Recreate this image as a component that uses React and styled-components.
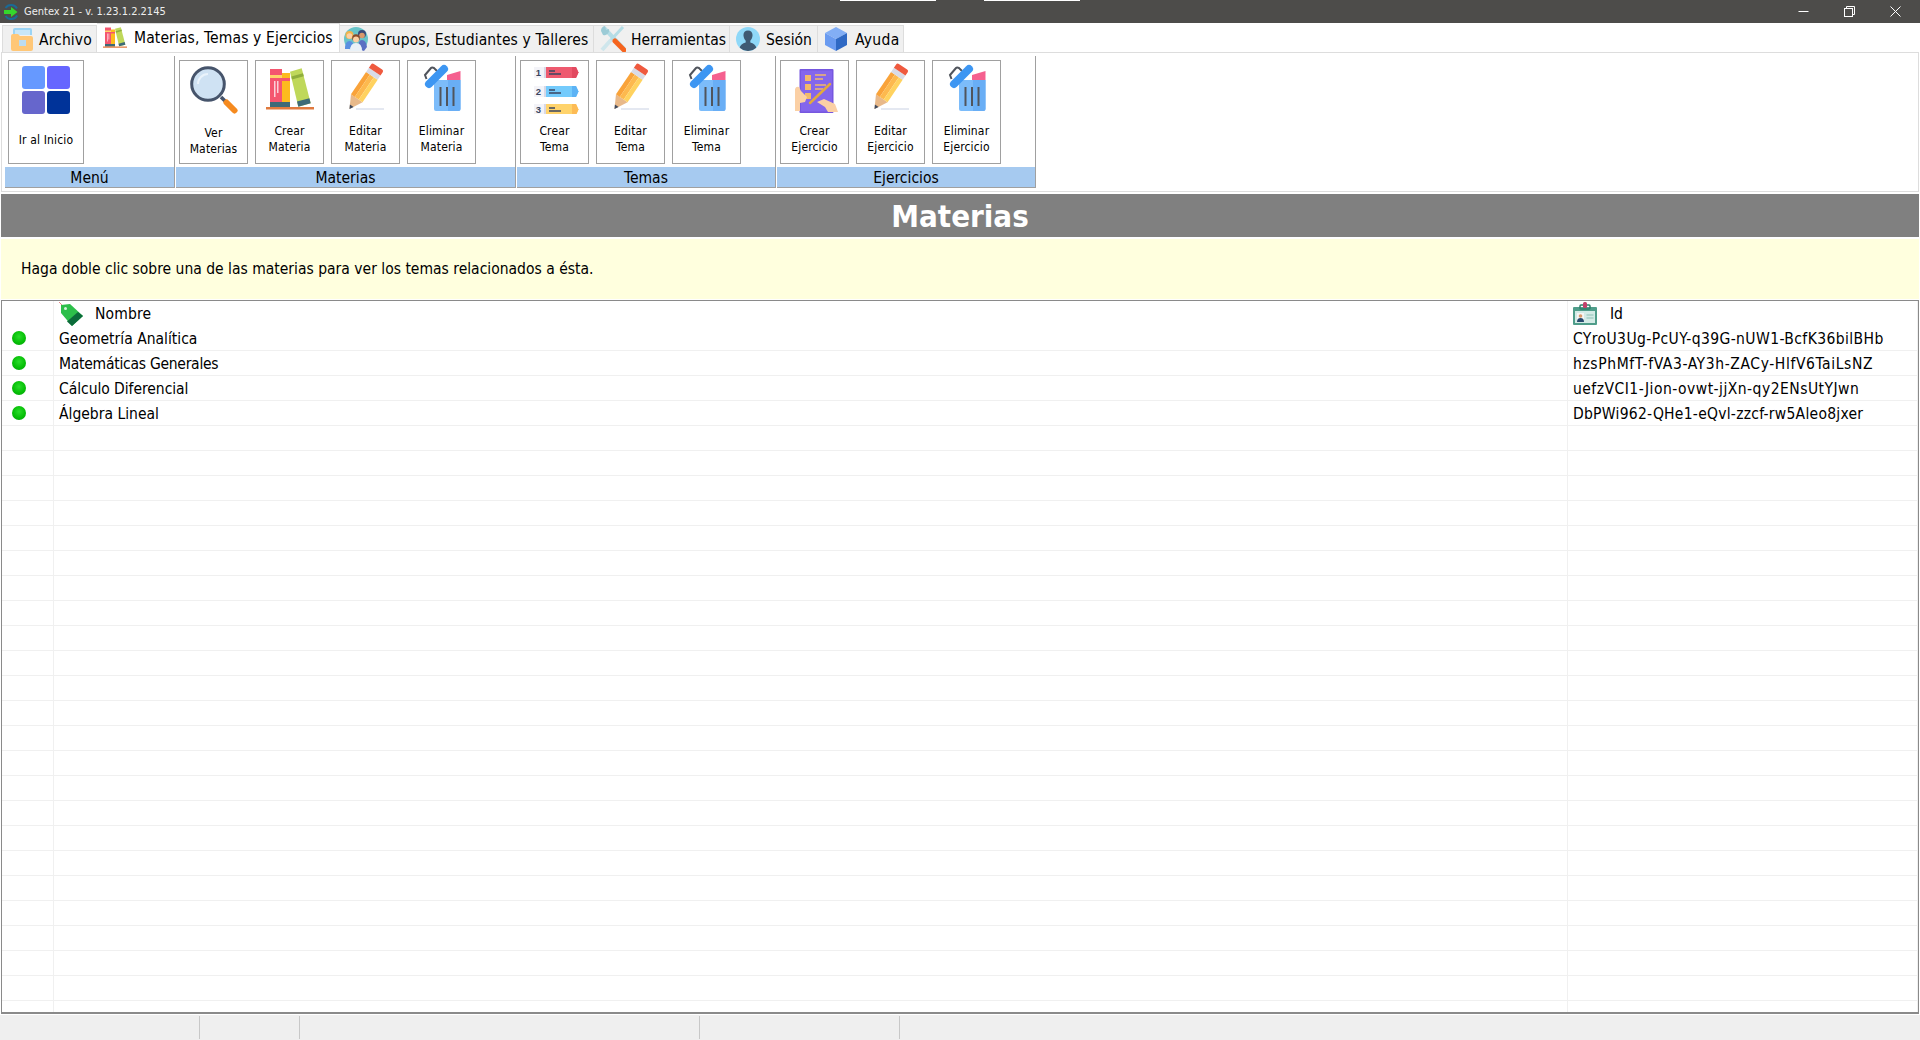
import React from "react";
import styled, { createGlobalStyle } from "styled-components";

const GlobalStyle = createGlobalStyle`
  html, body {
    margin: 0;
    padding: 0;
    background: #fff;
  }
  body {
    font-family: "DejaVu Sans Condensed", "DejaVu Sans", sans-serif;
    font-stretch: condensed;
    color: #000;
    overflow: hidden;
  }
  * {
    box-sizing: border-box;
  }
`;

const Window = styled.div`
  position: relative;
  display: flex;
  flex-direction: column;
  width: 1920px;
  height: 1040px;
  overflow: hidden;
`;
const TitleBar = styled.div`
  display: flex;
  align-items: center;
  height: 23px;
  padding: 0 2px 0 3px;
  background: #4d4c4a;
  color: #eeeeee;
  font-size: 11px;
`;
const TitleText = styled.span`
  margin-left: 5px;
  flex: 1;
`;
const WindowButton = styled.div`
  display: flex;
  align-items: center;
  justify-content: center;
  width: 46px;
  height: 23px;
`;
const ScreenMark = styled.div`
  position: absolute;
  top: 0;
  left: ${p => p.$left}px;
  width: ${p => p.$width}px;
  height: 1px;
  background: #fff;
`;
const TabStrip = styled.div`
  display: flex;
  align-items: flex-end;
  height: 29px;
  padding-left: 2px;
`;
const Tab = styled.div`
  display: flex;
  align-items: center;
  width: ${p => p.$width}px;
  height: ${p => (p.$active ? 29 : 27)}px;
  padding-left: ${p => p.$pad}px;
  gap: ${p => p.$gap}px;
  background: ${p => (p.$active ? "#fff" : "#f0f0f0")};
  border: 1px solid #dddddd;
  border-bottom: 0;
  border-left-width: ${p => (p.$first ? 1 : 0)}px;
  font-size: 15.5px;
  white-space: nowrap;
`;
const TabLabel = styled.span`
  padding-top: ${p => (p.$active ? 0 : 2)}px;
  letter-spacing: ${p => p.$spacing || 0}px;
`;
const Ribbon = styled.div`
  display: flex;
  height: 140px;
  margin: 0 1px 2px 1px;
  padding: 3px 0 3px 3px;
  border: 1px solid #dddddd;
  background: #fff;
`;
const Group = styled.div`
  display: flex;
  flex-direction: column;
  width: ${p => p.$width}px;
  margin-right: 1px;
  border-right: 1px solid #a0a0a0;
  border-bottom: 1px solid #a0a0a0;
`;
const GroupButtons = styled.div`
  display: flex;
  gap: 7px;
  height: 112px;
  padding: 4px 0 0 3px;
`;
const GroupLabel = styled.div`
  height: 20px;
  line-height: 23px;
  background: #a6caf0;
  font-size: 15.5px;
  text-align: center;
`;
const RibbonButton = styled.div`
  display: flex;
  flex-direction: column;
  align-items: center;
  width: ${p => p.$width || 69}px;
  height: 104px;
  padding-top: 5px;
  border: 1px solid #a0a0a0;
  font-size: 12px;
  letter-spacing: 0.15px;
`;
const ButtonText = styled.div`
  flex: 1;
  display: flex;
  align-items: center;
  padding-top: ${p => p.$drop}px;
  line-height: 16px;
  text-align: center;
`;
const Heading = styled.div`
  height: 43px;
  margin: 0 1px;
  background: #808080;
  color: #fff;
  font-size: 31px;
  font-weight: 700;
  line-height: 45px;
  text-align: center;
`;
const Hint = styled.div`
  display: flex;
  align-items: center;
  height: 60px;
  margin: 2px 1px 1px 1px;
  padding-left: 20px;
  background: #ffffde;
  font-size: 15.5px;
`;
const Table = styled.div`
  flex: 1;
  min-height: 0;
  margin: 0 1px;
  overflow: hidden;
  border: 1px solid #8a8a8a;
  border-bottom-width: 2px;
  background: #fff;
`;
const Row = styled.div`
  display: grid;
  grid-template-columns: 52px 1514px 1fr;
  height: 25px;
  font-size: 15.5px;
`;
const Cell = styled.div`
  display: flex;
  align-items: center;
  gap: ${p => p.$gap || 0}px;
  padding-left: ${p => p.$pad || 0}px;
  padding-top: ${p => p.$drop || 0}px;
  border-right: 1px solid #f0f0f0;
  border-bottom: ${p => (p.$head ? 0 : "1px solid #f0f0f0")};
  letter-spacing: ${p => p.$spacing || 0}px;
  white-space: nowrap;
`;
const Dot = styled.div`
  width: 14px;
  height: 14px;
  margin-top: -1px;
  border-radius: 50%;
  background: radial-gradient(circle at 50% 40%, #2bdc2b 0%, #07c007 55%, #009a09 100%);
`;
const StatusBar = styled.div`
  display: flex;
  height: 25px;
  margin-top: 1px;
  padding: 1px 0;
  background: #efefef;
`;
const StatusCell = styled.div`
  width: ${p => p.$width}px;
  border-right: 1px solid #c8c8c8;
`;

const AppIcon = () => (
  <svg width="16" height="16" viewBox="0 0 16 16">
    <path d="M2.500 4A6.800 6.800 0 0 1 14 4.500M14.200 11.500A6.800 6.800 0 0 1 2.500 12" fill="none" stroke="#1a6a96" strokeWidth="2" />
    <path d="M1 6h7V3l6.500 5L8 13v-3H1z" fill="#35d62c" />
  </svg>
);

const IconMin = () => (
  <svg width="11" height="11" viewBox="0 0 11 11">
    <path d="M0.5 5.5h10" stroke="#fff" strokeWidth="1" />
  </svg>
);

const IconRestore = () => (
  <svg width="11" height="11" viewBox="0 0 11 11" fill="none" stroke="#fff" strokeWidth="1">
    <rect x="0.5" y="2.5" width="8" height="8" />
    <path d="M2.5 2.5v-2h8v8h-2" />
  </svg>
);

const IconClose = () => (
  <svg width="11" height="11" viewBox="0 0 11 11">
    <path d="M0.5 0.5l10 10M10.5 0.5l-10 10" stroke="#fff" strokeWidth="1" />
  </svg>
);

const IconFolder = () => (
  <svg width="24" height="24" viewBox="0 0 24 24">
    <path d="M3 8V2.5Q3 1 5 1h15q2 0 2 1.5V8z" fill="#9bd4f5" />
    <path d="M5 3h15v5H5z" fill="#c8e6f7" />
    <path d="M1 9q0-2 2-2h5l2 2h11q2 0 2 2v11q0 2-2 2H3q-2 0-2-2z" fill="#ffc777" />
    <path d="M9 13h7v6H9z" fill="#bcdcf0" />
  </svg>
);

const IconBooks = ({ size = 48 }) => (
  <svg width={size} height={size} viewBox="0 0 48 48">
    <path d="M4 3h12v38H4z" fill="#f4566f" />
    <path d="M4 9h12v3H4z" fill="#ffd36b" />
    <path d="M4 36h12v5H4z" fill="#3d6a78" />
    <path d="M8 15h1.5v16H8zM11 15h1.5v12H11z" fill="#fbd0d8" />
    <path d="M16 7h8v34h-8z" fill="#fdbb1e" />
    <path d="M16 12h8v3h-8z" fill="#f4566f" />
    <path d="M16 36h8v5h-8z" fill="#3d6a78" />
    <path d="M24 5.7L35.7 2.3 44.7 37.3 32.3 40.7z" fill="#bfd85a" />
    <path d="M25.3 10.5L37 7.2 37.8 10.2 26 13.5z" fill="#8fae3c" />
    <path d="M31 35.5L43.4 32.2 44.7 37.3 32.3 40.7z" fill="#3d6a78" />
    <path d="M0 41h48v2.5H0z" fill="#e07a3e" />
  </svg>
);

const IconPeople = () => (
  <svg width="24" height="24" viewBox="0 0 24 24">
    <circle cx="12" cy="12" r="12" fill="#68c4c9" />
    <circle cx="5.5" cy="8" r="4" fill="#f2b44b" />
    <circle cx="5.5" cy="9" r="2.8" fill="#fbd0a5" />
    <circle cx="18" cy="7" r="4" fill="#3b4a7a" />
    <circle cx="18" cy="8.5" r="2.8" fill="#d99a6c" />
    <path d="M1 22q0-8 4.5-8T10 22z" fill="#5a8fe0" />
    <path d="M14 22q0-9 4-9t5 7l-3 4z" fill="#5b6fc2" />
    <circle cx="12" cy="11" r="3.8" fill="#8a4b2a" />
    <circle cx="12" cy="12.5" r="3" fill="#fbd0a5" />
    <path d="M6 24q0-8 6-8t6 8z" fill="#e9f1f7" />
  </svg>
);

const IconTools = () => (
  <svg width="26" height="26" viewBox="0 0 26 26">
    <path d="M4 2l20 21" stroke="#b5dde6" strokeWidth="4" />
    <path d="M1 5a5 5 0 0 1 4-5l1 4 3-1a5 5 0 0 1-6 6z" fill="#9ccbd6" />
    <path d="M23 1L10 15" stroke="#b5dde6" strokeWidth="3" />
    <path d="M11 14L2 24" stroke="#cfe6ec" strokeWidth="4" />
    <path d="M15 15l9 9" stroke="#f5641e" strokeWidth="5" strokeLinecap="round" />
  </svg>
);

const IconUser = () => (
  <svg width="24" height="24" viewBox="0 0 24 24">
    <circle cx="12" cy="12" r="12" fill="#8fd8f8" />
    <path d="M12 3.5c3.2 0 4.8 2.4 4.5 5.3-.2 2.2-1.2 4-2.2 5v1.6c3.2.8 5.6 2.7 6 5.4A12 12 0 0 1 12 24a12 12 0 0 1-8.3-3.2c.4-2.7 2.8-4.6 6-5.4v-1.6c-1-1-2-2.8-2.2-5C7.200 5.900 8.800 3.500 12 3.500z" fill="#3f5a73" />
  </svg>
);

const IconCube = () => (
  <svg width="22" height="24" viewBox="0 0 22 24">
    <path d="M11 0l11 6-11 6L0 6z" fill="#82aef5" />
    <path d="M0 6l11 6v12L0 18z" fill="#6a9bf0" />
    <path d="M22 6l-11 6v12l11-6z" fill="#2f69c4" />
  </svg>
);

const IconGrid = () => (
  <svg width="48" height="48" viewBox="0 0 48 48">
    <rect width="23" height="23" rx="3" fill="#6699ff" />
    <rect x="25" width="23" height="23" rx="3" fill="#6666ff" />
    <rect y="25" width="23" height="23" rx="3" fill="#6666cc" />
    <rect x="25" y="25" width="23" height="23" rx="3" fill="#003399" />
  </svg>
);

const IconLens = () => (
  <svg width="48" height="48" viewBox="0 0 48 48">
    <path d="M31 31l6 6" stroke="#46546b" strokeWidth="3.500" />
    <path d="M36.500 36.500l8 8" stroke="#f58a1f" strokeWidth="6" strokeLinecap="round" />
    <circle cx="18" cy="18" r="16.300" fill="#cfe2f3" stroke="#46546b" strokeWidth="3" />
    <path d="M8 18a10 10 0 0 1 10-10" fill="none" stroke="#eaf3fb" strokeWidth="2" />
  </svg>
);

const IconPencil = () => (
  <svg width="48" height="48" viewBox="0 0 48 48" overflow="visible">
    <path d="M14 43h28" stroke="#dbe0ec" strokeWidth="1.500" />
    <g transform="translate(7.500 43) rotate(34)">
      <path d="M0 0L-7 -13H7z" fill="#e8b98a" />
      <path d="M0 0L-2.200 -4H2.200z" fill="#3f4a5e" />
      <path d="M-7 -13V-40H-2.400V-13z" fill="#f9a33a" />
      <path d="M-2.400 -13V-40H2.400V-13z" fill="#fdb94e" />
      <path d="M2.400 -13V-40H7V-13z" fill="#ffd25f" />
      <path d="M-7 -40H7V-45H-7z" fill="#d9dbe6" />
      <path d="M-7 -45H7V-49Q7 -51 5 -51H-5Q-7 -51 -7 -49z" fill="#ef5a3f" />
    </g>
  </svg>
);

const IconTrash = () => (
  <svg width="48" height="48" viewBox="0 0 48 48" overflow="visible">
    <path d="M29 14v-5l13.500-4v9z" fill="#f5608f" />
    <path d="M16 14h26.500v29q0 2-2 2H18q-2 0-2-2z" fill="#7cbcfa" />
    <path d="M30 14h12.500v29q0 2-2 2H30z" fill="#69aef5" />
    <path d="M22.500 21v19M29 21v19M35.500 21v19" stroke="#50545c" strokeWidth="2" />
    <path d="M8.500 13L7 9l6-7q1-1 3 0l3 3" fill="none" stroke="#50545c" strokeWidth="2" />
    <path d="M11 18L26 3" stroke="#3d96f2" strokeWidth="8" strokeLinecap="round" />
  </svg>
);

const ListRow = ({ y, n, color, tip }) => (
  <g>
    <rect x="3" y={y} width="10" height="11" fill="#f3f3f8" />
    <text x="7.500" y={y + 9} fontSize="9.500" fontWeight="700" textAnchor="middle" fill="#3a4560" fontFamily="Liberation Sans, sans-serif">{n}</text>
    <path d={`M13 ${y}H45l2.500 5.500-2.500 5.500H13z`} fill={color} />
    <path d={`M41 ${y}h4l2.500 5.500-2.500 5.500h-4z`} fill={tip} />
    <rect x="13" y={y} width="2" height="11" fill="#d8d8e6" />
    <path d={`M18 ${y + 4}h6M18 ${y + 7}h12`} stroke="#3a4560" strokeWidth="1.300" />
  </g>
);

const IconList = () => (
  <svg width="48" height="48" viewBox="0 0 48 48">
    <ListRow y={1} n="1" color="#ee5a6f" tip="#e24a60" />
    <ListRow y={20} n="2" color="#74cbfc" tip="#5cb3f5" />
    <ListRow y={38} n="3" color="#ffd36b" tip="#fdbb55" />
  </svg>
);

const IconExercise = () => (
  <svg width="48" height="48" viewBox="0 0 48 48">
    <rect x="8.500" y="3" width="34" height="44" rx="1" fill="#7657df" />
    <rect x="10" y="4.500" width="31" height="41" fill="#8466ec" />
    <path d="M14 9h6v6h-6zM14 18h6v6h-6zM14 27h6v6h-6z" fill="#f2b96a" />
    <path d="M24 9h11M24 13h8M24 19h11M24 23h8" stroke="#f2b96a" strokeWidth="1.500" />
    <path d="M4 45V23q1-3 4-2l2 4 6 6-2 5-5 1v8z" fill="#fbd0a5" />
    <path d="M47 46l-3-8-11-5-7 3 8 5 3 5z" fill="#fbd0a5" />
    <path d="M19 37l20-19" stroke="#e3a93c" strokeWidth="2.500" strokeLinecap="round" />
  </svg>
);

const IconTag = () => (
  <svg width="24" height="24" viewBox="0 0 24 24">
    <path d="M0 0l4 4" stroke="#e26a6a" strokeWidth="0.800" />
    <path d="M2 3l9-1 13 12-11 10L2 11z" fill="#2dbf4a" />
    <path d="M19 10l5 4-11 10-5-4.500z" fill="#0b6b3a" />
    <circle cx="6.500" cy="6.500" r="1.500" fill="#d8f2df" />
  </svg>
);

const IconCard = () => (
  <svg width="24" height="24" viewBox="0 0 24 24">
    <rect x="0" y="5" width="24" height="18" rx="1" fill="#4f9d8a" />
    <rect x="7" y="3" width="10" height="4" rx="1" fill="none" stroke="#2f7f6a" strokeWidth="1.500" />
    <rect x="10" y="0" width="4" height="6" rx="1.500" fill="#c2406a" />
    <rect x="2" y="9" width="20" height="12" fill="#d4ebe6" />
    <rect x="4" y="11" width="7" height="9" fill="#f5f5f5" />
    <circle cx="7.500" cy="14" r="1.800" fill="#d99a6c" />
    <path d="M4 20q0-4 3.500-4t3.500 4z" fill="#274a6e" />
    <path d="M13.500 13h7M13.500 16h7" stroke="#a5cfc6" strokeWidth="1.300" />
  </svg>
);

const tabs = [
  { label: "Archivo", width: 95, pad: 7, gap: 5, icon: <IconFolder />, first: true, spacing: 0.1 },
  { label: "Materias, Temas y Ejercicios", width: 243, pad: 6, gap: 7, icon: <IconBooks size={24} />, active: true, spacing: 0.12 },
  { label: "Grupos, Estudiantes y Talleres", width: 254, pad: 4, gap: 7, icon: <IconPeople />, spacing: 0.12 },
  { label: "Herramientas", width: 136, pad: 6, gap: 5, icon: <IconTools /> },
  { label: "Sesión", width: 88, pad: 6, gap: 6, icon: <IconUser /> },
  { label: "Ayuda", width: 86, pad: 7, gap: 8, icon: <IconCube />, spacing: 0.3 }
];

const groups = [
  {
    label: "Menú",
    width: 170,
    buttons: [{ text: "Ir al Inicio", icon: <IconGrid />, width: 76, drop: 2 }]
  },
  {
    label: "Materias",
    width: 340,
    buttons: [
      { text: ["Ver", "Materias"], icon: <IconLens />, drop: 4 },
      { text: ["Crear", "Materia"], icon: <IconBooks />, drop: 0 },
      { text: ["Editar", "Materia"], icon: <IconPencil />, drop: 0 },
      { text: ["Eliminar", "Materia"], icon: <IconTrash />, drop: 0 }
    ]
  },
  {
    label: "Temas",
    width: 259,
    buttons: [
      { text: ["Crear", "Tema"], icon: <IconList />, drop: 0 },
      { text: ["Editar", "Tema"], icon: <IconPencil />, drop: 0 },
      { text: ["Eliminar", "Tema"], icon: <IconTrash />, drop: 0 }
    ]
  },
  {
    label: "Ejercicios",
    width: 259,
    buttons: [
      { text: ["Crear", "Ejercicio"], icon: <IconExercise />, drop: 0 },
      { text: ["Editar", "Ejercicio"], icon: <IconPencil />, drop: 0 },
      { text: ["Eliminar", "Ejercicio"], icon: <IconTrash />, drop: 0 }
    ]
  }
];

const materias = [
  { name: "Geometría Analítica", spacing: 0, id: "CYroU3Ug-PcUY-q39G-nUW1-BcfK36bilBHb", idSpacing: 0.4 },
  { name: "Matemáticas Generales", spacing: -0.26, id: "hzsPhMfT-fVA3-AY3h-ZACy-HlfV6TaiLsNZ", idSpacing: 0.6 },
  { name: "Cálculo Diferencial", spacing: -0.05, id: "uefzVCI1-Jion-ovwt-jjXn-qy2ENsUtYJwn", idSpacing: 0.47 },
  { name: "Álgebra Lineal", spacing: 0, id: "DbPWi962-QHe1-eQvl-zzcf-rw5Aleo8jxer", idSpacing: 0.26 }
];

const emptyRows = Array.from({ length: 24 }, (_, i) => i);

export default function App() {
  return (
    <Window>
      <GlobalStyle />
      <ScreenMark $left={840} $width={96} />
      <ScreenMark $left={984} $width={96} />
      <TitleBar>
        <AppIcon />
        <TitleText>Gentex 21 - v. 1.23.1.2.2145</TitleText>
        <WindowButton><IconMin /></WindowButton>
        <WindowButton><IconRestore /></WindowButton>
        <WindowButton><IconClose /></WindowButton>
      </TitleBar>
      <TabStrip>
        {tabs.map(t => (
          <Tab key={t.label} $width={t.width} $pad={t.pad} $gap={t.gap} $active={t.active} $first={t.first}>
            {t.icon}
            <TabLabel $active={t.active} $spacing={t.spacing}>{t.label}</TabLabel>
          </Tab>
        ))}
      </TabStrip>
      <Ribbon>
        {groups.map(g => (
          <Group key={g.label} $width={g.width}>
            <GroupButtons>
              {g.buttons.map((b, i) => (
                <RibbonButton key={i} $width={b.width}>
                  {b.icon}
                  <ButtonText $drop={b.drop}>
                    <div>
                      {Array.isArray(b.text) ? b.text.map(line => <div key={line}>{line}</div>) : b.text}
                    </div>
                  </ButtonText>
                </RibbonButton>
              ))}
            </GroupButtons>
            <GroupLabel>{g.label}</GroupLabel>
          </Group>
        ))}
      </Ribbon>
      <Heading>Materias</Heading>
      <Hint>Haga doble clic sobre una de las materias para ver los temas relacionados a ésta.</Hint>
      <Table>
        <Row>
          <Cell $head />
          <Cell $head $pad={5} $gap={12} $spacing={0.12}><IconTag />Nombre</Cell>
          <Cell $head $pad={5} $gap={13}><IconCard />Id</Cell>
        </Row>
        {materias.map(m => (
          <Row key={m.id}>
            <Cell $pad={10}><Dot /></Cell>
            <Cell $pad={5} $drop={2} $spacing={m.spacing}>{m.name}</Cell>
            <Cell $pad={5} $drop={2} $spacing={m.idSpacing}>{m.id}</Cell>
          </Row>
        ))}
        {emptyRows.map(i => (
          <Row key={i}>
            <Cell />
            <Cell />
            <Cell />
          </Row>
        ))}
      </Table>
      <StatusBar>
        <StatusCell $width={200} />
        <StatusCell $width={100} />
        <StatusCell $width={400} />
        <StatusCell $width={200} />
      </StatusBar>
    </Window>
  );
}
